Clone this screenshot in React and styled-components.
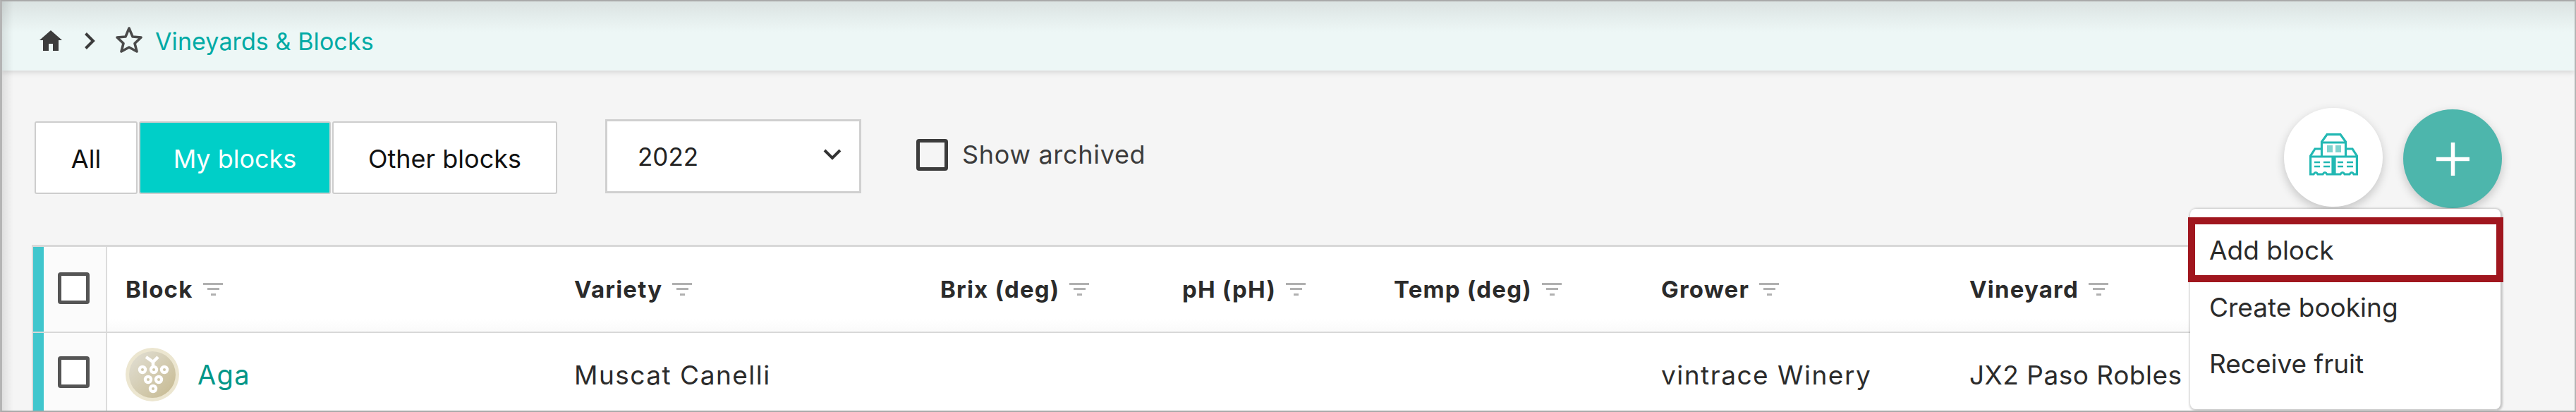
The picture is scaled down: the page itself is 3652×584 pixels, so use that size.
import styled, { createGlobalStyle } from "styled-components"

const Global = createGlobalStyle`
  html, body { margin: 0; padding: 0; }
  body { font-family: Inter, "Liberation Sans", sans-serif; background: #f5f5f5; }
  * { box-sizing: border-box; }
`

const Page = styled.div`
  position: relative;
  width: 3652px;
  height: 584px;
  overflow: hidden;
  background: #f5f5f5;
  border-top: 2px solid #a9a9a9;
  border-left: 3px solid #b4b4b4;
  border-bottom: 2px solid #a9a9a9;
  border-right: 2px solid #b4b4b4;
  &::before {
    content: "";
    position: absolute;
    inset: 0 auto 0 0;
    width: 16px;
    background: linear-gradient(to right, rgba(0,0,0,0.09), rgba(0,0,0,0));
    pointer-events: none;
    z-index: 5;
  }
`

const Crumbs = styled.div`
  height: 98px;
  display: flex;
  align-items: center;
  padding: 14px 0 0 53px;
  background: linear-gradient(to bottom, #dbe3e2 0, #edf7f6 44px);
  box-shadow: 0 3px 7px rgba(0,0,0,0.12);
`

const CrumbLink = styled.span`
  font-size: 34px;
  letter-spacing: 0.1px;
  color: #00aaa5;
  margin-left: 17px;
`

const Toolbar = styled.div`
  display: flex;
  align-items: flex-start;
  height: 247px;
  padding: 70px 103px 0 46px;
`

const Tabs = styled.div`
  display: flex;
  gap: 2px;
  margin-top: 2px;
`

const Tab = styled.div`
  height: 103px;
  width: ${p => p.$w}px;
  display: flex;
  align-items: center;
  justify-content: center;
  padding-top: 2px;
  font-size: 36px;
  color: ${p => (p.$on ? "#fff" : "#111")};
  background: ${p => (p.$on ? "#00cfc8" : "#fff")};
  border: 2px solid #cdcdcd;
  border-radius: 3px;
`

const YearSelect = styled.div`
  width: 363px;
  height: 105px;
  margin: -1px 0 0 68px;
  display: flex;
  align-items: center;
  justify-content: space-between;
  padding: 0 25px 0 43px;
  background: #fff;
  border: 3px solid #d0d0d0;
  font-size: 35px;
  color: #222;
`

const ArchiveLabel = styled.div`
  display: flex;
  align-items: center;
  gap: 20px;
  height: 104px;
  margin: -3px 0 0 78px;
  font-size: 36px;
  letter-spacing: 0.7px;
  color: #3c3c3c;
`

const Box = styled.span`
  display: block;
  flex: none;
  width: 45px;
  height: 45px;
  border: 5px solid ${p => (p.$dark ? "#3c3c3c" : "#555")};
  border-radius: 4px;
  background: ${p => (p.$dark ? "transparent" : "#fff")};
`

const Actions = styled.div`
  margin-left: auto;
  display: flex;
  align-items: flex-start;
  gap: 29px;
  margin-top: -17px;
`

const Round = styled.div`
  width: 140px;
  height: 140px;
  border-radius: 50%;
  display: flex;
  align-items: center;
  justify-content: center;
  background: ${p => (p.$teal ? "#4db6ac" : "#fff")};
  margin-top: ${p => (p.$teal ? 2 : 0)}px;
  box-shadow: 0 5px 14px rgba(0,0,0,0.2);
`

const Table = styled.div`
  margin-left: 42px;
  width: 3495px;
  border-top: 3px solid #d8d8d8;
  border-left: 2px solid #dcdcdc;
  background: #fff;
`

const Row = styled.div`
  display: grid;
  grid-template-columns: 15px 90px 662px 519px 343px 300px 379px 437px 1fr;
  height: ${p => p.$h}px;
  border-bottom: ${p => (p.$head ? "2px solid #d8d8d8" : "none")};
  background: ${p => (p.$head ? "linear-gradient(to bottom, #fff 85%, #fafafa)" : "#fff")};
  color: #2b2b2b;
`

const Strip = styled.div`
  background: #40c6cd;
`

const BoxCell = styled.div`
  display: flex;
  align-items: center;
  justify-content: center;
  background: #fbfbfb;
  border-right: 2px solid #dcdcdc;
  padding-right: 3px;
  padding-bottom: ${p => (p.$head ? 3 : 0)}px;
`

const Cell = styled.div`
  display: flex;
  align-items: center;
  gap: ${p => (p.$head ? 14 : 26)}px;
  padding-left: ${p => p.$pl || 0}px;
  padding-top: ${p => (p.$head ? 0 : 8)}px;
  font-weight: ${p => (p.$head ? 700 : 400)};
  font-size: ${p => (p.$head ? 33 : 37)}px;
  letter-spacing: ${p => (p.$head ? 1.2 : p.$tight ? 0.5 : 1.5)}px;
  white-space: nowrap;
`

const BlockName = styled.span`
  color: #009688;
  font-size: 38px;
  letter-spacing: 1.4px;
`

const Menu = styled.div`
  position: absolute;
  left: 3102px;
  top: 294px;
  width: 440px;
  height: 284px;
  background: #fff;
  border-radius: 8px;
  box-shadow: 1px 1px 3px 2px rgba(0,0,0,0.2);
  padding-top: 12px;
  z-index: 6;
`

const MenuItem = styled.div`
  height: ${p => p.$h}px;
  display: flex;
  align-items: center;
  padding-left: 27px;
  font-size: 37px;
  color: #2b2b2b;
  ${p => p.$marked && `
    position: relative;
    &::after {
      content: "";
      position: absolute;
      inset: 0 -4px 0 -3px;
      border: 10px solid #a0161e;
    }
  `}
`

function FilterIcon() {
  return (
    <svg width="28" height="18" viewBox="0 0 28 18" style={{ flex: "none" }}>
      <rect x="0" y="0" width="28" height="3" fill="#b0b0b0" />
      <rect x="6" y="7" width="17" height="3" fill="#b0b0b0" />
      <rect x="11" y="15" width="7" height="3" fill="#b0b0b0" />
    </svg>
  )
}

function HomeIcon() {
  return (
    <svg width="32" height="29" viewBox="0 0 32 29" style={{ marginTop: -1 }}>
      <path d="M16 0 L32 14 L27 14 L27 29 L19 29 L19 19 L13 19 L13 29 L5 29 L5 14 L0 14 Z" fill="#3c3c3c" />
    </svg>
  )
}

function Chevron() {
  return (
    <svg width="15" height="24" viewBox="0 0 15 24" style={{ marginLeft: 32 }}>
      <path d="M1.5 1.5 L12 12 L1.5 22.5" fill="none" stroke="#3c3c3c" strokeWidth="4" />
    </svg>
  )
}

function StarIcon() {
  return (
    <svg width="40" height="39" viewBox="0 0 40 39" style={{ marginLeft: 28, marginTop: -4 }}>
      <path d="M20 3 L25 15 L37 16 L28 24.5 L31 36 L20 30 L9 36 L12 24.5 L3 16 L15 15 Z" fill="none" stroke="#4a4a4a" strokeWidth="3.6" strokeLinejoin="round" />
    </svg>
  )
}

function CaretIcon() {
  return (
    <svg width="26" height="16" viewBox="0 0 26 16" style={{ marginTop: -6 }}>
      <path d="M2 2 L13 13 L24 2" fill="none" stroke="#333" strokeWidth="4" />
    </svg>
  )
}

function PalletIcon() {
  return (
    <svg width="69" height="60" viewBox="0 0 69 60" fill="none" stroke="#22b8b3" strokeWidth="3.2" style={{ marginTop: -8 }}>
      <path d="M17.5 33 V12 L25 1.6 H44 L51.5 12 V33" />
      <path d="M17.5 13 H51.5" />
      <rect x="25" y="17" width="8" height="10" fill="#7fd3cf" stroke="none" />
      <rect x="37" y="17" width="8" height="10" fill="#7fd3cf" stroke="none" />
      <path d="M17.5 22 H8 L1.6 32 V58 H6 Q9 53 12 58 H19 Q22 53 25 58 H33 V33 M36 33 V58 H44 Q47 53 50 58 H57 Q60 53 63 58 H67.4 V32 L61 22 H51.5" />
      <path d="M1.6 33 H67.4" />
      <path d="M7 41 H15 M20 41 H29 M7 47 H15 M20 47 H29 M40 41 H48 M53 41 H62 M40 47 H48 M53 47 H62" strokeWidth="2.4" />
    </svg>
  )
}

function PlusIcon() {
  return (
    <svg width="47" height="47" viewBox="0 0 47 47">
      <path d="M23.5 0 V47 M0 23.5 H47" stroke="#fff" strokeWidth="5.5" />
    </svg>
  )
}

function GrapeBadge() {
  const dots = [[24, 31], [40, 31], [55, 31], [32, 45], [47, 45], [39, 58]]
  return (
    <svg width="76" height="76" viewBox="0 0 76 76" style={{ flex: "none" }}>
      <defs>
        <linearGradient id="grape" x1="0" y1="0" x2="1" y2="1">
          <stop offset="0" stopColor="#e2e0d6" />
          <stop offset="1" stopColor="#c6b98f" />
        </linearGradient>
      </defs>
      <circle cx="38" cy="38" r="38" fill="#ece6d0" />
      <circle cx="38" cy="38" r="33" fill="url(#grape)" />
      <path d="M29 13 L39 20 L46 13 M39 20 V26" stroke="#fff" strokeWidth="4.5" fill="none" />
      {dots.map(([x, y]) => (
        <g key={`${x}-${y}`}>
          <circle cx={x} cy={y} r="6.2" fill="#fff" />
          <circle cx={x} cy={y} r="2" fill="#cfc7a9" />
        </g>
      ))}
    </svg>
  )
}

const columns = [
  ["Block", 26],
  ["Variety", 0],
  ["Brix (deg)", 0],
  ["pH (pH)", 0],
  ["Temp (deg)", 0],
  ["Grower", 0],
  ["Vineyard", 0],
]

export default function App() {
  return (
    <Page>
      <Global />
      <Crumbs>
        <HomeIcon />
        <Chevron />
        <StarIcon />
        <CrumbLink>Vineyards &amp; Blocks</CrumbLink>
      </Crumbs>
      <Toolbar>
        <Tabs>
          <Tab $w={146}>All</Tab>
          <Tab $w={272} $on>My blocks</Tab>
          <Tab $w={319}>Other blocks</Tab>
        </Tabs>
        <YearSelect>
          2022
          <CaretIcon />
        </YearSelect>
        <ArchiveLabel>
          <Box $dark />
          Show archived
        </ArchiveLabel>
        <Actions>
          <Round><PalletIcon /></Round>
          <Round $teal><PlusIcon /></Round>
        </Actions>
      </Toolbar>
      <Table>
        <Row $head $h={122}>
          <Strip />
          <BoxCell $head><Box /></BoxCell>
          {columns.map(([name, pl]) => (
            <Cell $head $pl={pl} key={name}>
              {name}
              <FilterIcon />
            </Cell>
          ))}
        </Row>
        <Row $h={110}>
          <Strip />
          <BoxCell><Box /></BoxCell>
          <Cell $pl={26}>
            <GrapeBadge />
            <BlockName>Aga</BlockName>
          </Cell>
          <Cell>Muscat Canelli</Cell>
          <Cell />
          <Cell />
          <Cell />
          <Cell>vintrace Winery</Cell>
          <Cell $tight>JX2 Paso Robles</Cell>
        </Row>
      </Table>
      <Menu>
        <MenuItem $marked $h={92}>Add block</MenuItem>
        <MenuItem $h={70}>Create booking</MenuItem>
        <MenuItem $h={90}>Receive fruit</MenuItem>
      </Menu>
    </Page>
  )
}
